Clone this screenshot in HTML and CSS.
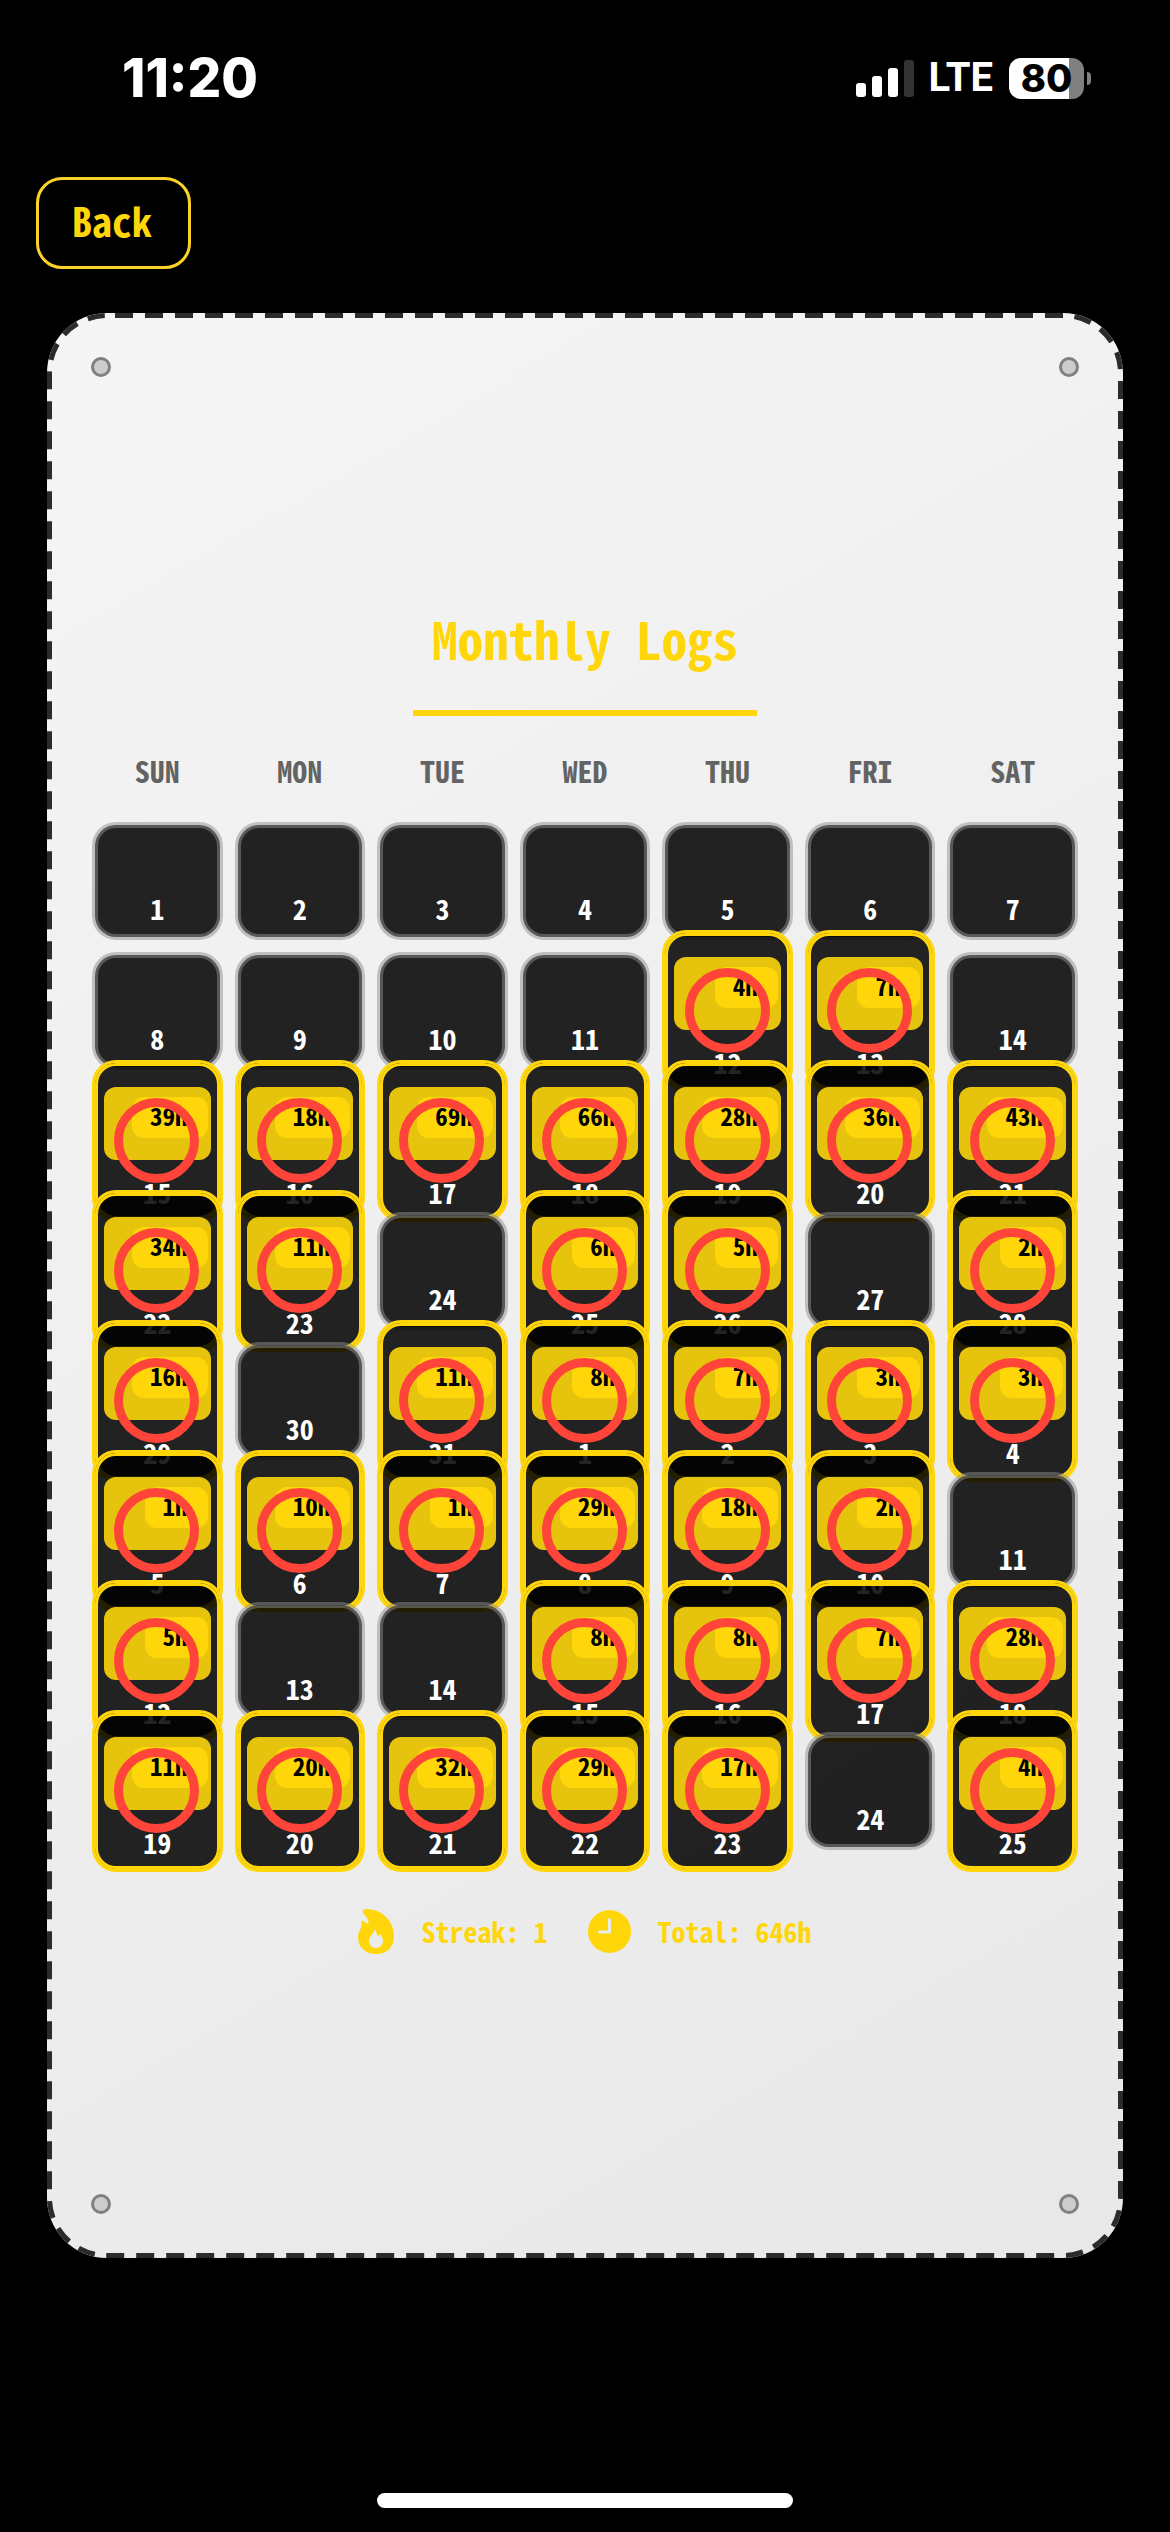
FILE: index.html
```html
<!DOCTYPE html>
<html lang="en">
<head>
<meta charset="utf-8">
<meta name="viewport" content="width=device-width, initial-scale=1">
<title>Monthly Logs</title>
<link rel="stylesheet" href="styles.css">
</head>
<body>
<header class="status">
  <time class="clock">11:20</time>
  <div class="indicators">
    <svg class="signal" viewBox="0 0 58 37" aria-hidden="true">
      <rect x="0" y="23" width="10" height="14" rx="3" fill="#fff"/>
      <rect x="16" y="16" width="10" height="21" rx="3" fill="#fff"/>
      <rect x="32" y="8" width="10" height="29" rx="3" fill="#fff"/>
      <rect x="48" y="0" width="10" height="37" rx="3" fill="#333"/>
    </svg>
    <span class="network">LTE</span>
    <div class="battery"><span class="level">80</span></div>
  </div>
</header>
<nav class="nav"><button class="back" type="button">Back</button></nav>
<main class="card">
  <svg class="stitch" aria-hidden="true"><rect width="100%" height="100%" rx="60"/></svg>
  <span class="screw top left"></span><span class="screw top right"></span>
  <span class="screw bottom left"></span><span class="screw bottom right"></span>
  <h1 class="title">Monthly Logs</h1>
  <table class="calendar">
    <thead>
      <tr class="week"><th>SUN</th><th>MON</th><th>TUE</th><th>WED</th><th>THU</th><th>FRI</th><th>SAT</th></tr>
    </thead>
    <tbody>
      <tr class="week">
        <td class="day">1</td>
        <td class="day">2</td>
        <td class="day">3</td>
        <td class="day">4</td>
        <td class="day">5</td>
        <td class="day">6</td>
        <td class="day">7</td>
      </tr>
      <tr class="week">
        <td class="day">8</td>
        <td class="day">9</td>
        <td class="day">10</td>
        <td class="day">11</td>
        <td class="day logged"><div class="log"><span class="hours">4h</span></div>12</td>
        <td class="day logged"><div class="log"><span class="hours">7h</span></div>13</td>
        <td class="day">14</td>
      </tr>
      <tr class="week">
        <td class="day logged"><div class="log"><span class="hours">39h</span></div>15</td>
        <td class="day logged"><div class="log"><span class="hours">18h</span></div>16</td>
        <td class="day logged"><div class="log"><span class="hours">69h</span></div>17</td>
        <td class="day logged"><div class="log"><span class="hours">66h</span></div>18</td>
        <td class="day logged"><div class="log"><span class="hours">28h</span></div>19</td>
        <td class="day logged"><div class="log"><span class="hours">36h</span></div>20</td>
        <td class="day logged"><div class="log"><span class="hours">43h</span></div>21</td>
      </tr>
      <tr class="week">
        <td class="day logged"><div class="log"><span class="hours">34h</span></div>22</td>
        <td class="day logged"><div class="log"><span class="hours">11h</span></div>23</td>
        <td class="day">24</td>
        <td class="day logged"><div class="log"><span class="hours">6h</span></div>25</td>
        <td class="day logged"><div class="log"><span class="hours">5h</span></div>26</td>
        <td class="day">27</td>
        <td class="day logged"><div class="log"><span class="hours">2h</span></div>28</td>
      </tr>
      <tr class="week">
        <td class="day logged"><div class="log"><span class="hours">16h</span></div>29</td>
        <td class="day">30</td>
        <td class="day logged"><div class="log"><span class="hours">11h</span></div>31</td>
        <td class="day logged"><div class="log"><span class="hours">8h</span></div>1</td>
        <td class="day logged"><div class="log"><span class="hours">7h</span></div>2</td>
        <td class="day logged"><div class="log"><span class="hours">3h</span></div>3</td>
        <td class="day logged"><div class="log"><span class="hours">3h</span></div>4</td>
      </tr>
      <tr class="week">
        <td class="day logged"><div class="log"><span class="hours">1h</span></div>5</td>
        <td class="day logged"><div class="log"><span class="hours">10h</span></div>6</td>
        <td class="day logged"><div class="log"><span class="hours">1h</span></div>7</td>
        <td class="day logged"><div class="log"><span class="hours">29h</span></div>8</td>
        <td class="day logged"><div class="log"><span class="hours">18h</span></div>9</td>
        <td class="day logged"><div class="log"><span class="hours">2h</span></div>10</td>
        <td class="day">11</td>
      </tr>
      <tr class="week">
        <td class="day logged"><div class="log"><span class="hours">5h</span></div>12</td>
        <td class="day">13</td>
        <td class="day">14</td>
        <td class="day logged"><div class="log"><span class="hours">8h</span></div>15</td>
        <td class="day logged"><div class="log"><span class="hours">8h</span></div>16</td>
        <td class="day logged"><div class="log"><span class="hours">7h</span></div>17</td>
        <td class="day logged"><div class="log"><span class="hours">28h</span></div>18</td>
      </tr>
      <tr class="week">
        <td class="day logged"><div class="log"><span class="hours">11h</span></div>19</td>
        <td class="day logged"><div class="log"><span class="hours">20h</span></div>20</td>
        <td class="day logged"><div class="log"><span class="hours">32h</span></div>21</td>
        <td class="day logged"><div class="log"><span class="hours">29h</span></div>22</td>
        <td class="day logged"><div class="log"><span class="hours">17h</span></div>23</td>
        <td class="day">24</td>
        <td class="day logged"><div class="log"><span class="hours">4h</span></div>25</td>
      </tr>
    </tbody>
  </table>
  <footer class="summary">
    <span class="stat">
      <svg class="flame" viewBox="0 0 36 45" aria-hidden="true"><path fill-rule="evenodd" fill="#ffd60a" d="M5.500 4.500C4 2 5 0 8 0C24 0 36 12 36 27C36 38 29 45 18 45C7 45 0 38 0 28C0 22 4.500 19 3.500 14C3 11.500 5 11 6.500 12.500C8 14 9.500 14.500 10.500 15C11 11 8 8 5.500 4.500ZM16 21.500C16 25 11 27 11 32C11 36 14 39 18 39C22 39 25 36 25 32C25 29 23.500 26.500 21.500 25C21 26.500 20.500 27 20 27C18.500 26 18.500 22 16.500 20.500Z"/></svg>
      Streak: 1
    </span>
    <span class="stat">
      <svg class="dial" viewBox="0 0 43 43" aria-hidden="true"><circle cx="21.500" cy="21.500" r="21.500" fill="#ffd60a"/><path d="M21.500 9.500V22H11.500" fill="none" stroke="#ebebeb" stroke-width="3" stroke-linecap="round" stroke-linejoin="round"/></svg>
      Total: 646h
    </span>
  </footer>
</main>
<div class="home-bar"></div>
</body>
</html>
```
FILE: styles.css
```css
*, *::before, *::after { box-sizing: border-box; }

body {
  margin: 0;
  min-height: 100vh;
  display: flex;
  flex-direction: column;
  background: #000;
  color: #fff;
  font-family: "Noto Sans Mono CJK JP", "Liberation Mono", monospace;
  font-weight: 700;
}

.status {
  display: flex;
  justify-content: space-between;
  align-items: center;
  padding: 48px 86px 0 122px;
}
.clock { font: 800 53px/60px Inter, sans-serif; }
.indicators { display: flex; align-items: center; }
.signal { width: 58px; height: 37px; margin-right: 15px; }
.network { font: 700 40px/44px Roboto, sans-serif; margin-right: 16px; }
.battery {
  position: relative;
  width: 75px;
  height: 41px;
  border-radius: 12px;
  background: linear-gradient(90deg, #fff 80%, #808080 80%);
  color: #000;
  text-align: center;
}
.battery::after {
  content: "";
  position: absolute;
  left: 78px;
  top: 14px;
  width: 4px;
  height: 13px;
  border-radius: 0 4px 4px 0;
  background: #808080;
}
.level { font: 800 38px/41px Inter, sans-serif; }

.nav { padding: 69px 36px 0; }
.back {
  display: block;
  padding: 17px 36px 23px 33px;
  border: 3px solid #fad22a;
  border-radius: 26px;
  background: #000;
  color: #ffd60a;
  font: inherit;
  font-size: 40px;
  line-height: 46px;
}

.card {
  position: relative;
  display: flex;
  flex-direction: column;
  align-items: center;
  margin: 44px 47px 0;
  padding: 292px 45px 304px;
  border-radius: 60px;
  overflow: hidden;
  background: linear-gradient(150deg, #f5f5f5, #e8e8e8);
}
.stitch {
  position: absolute;
  inset: 0;
  width: 100%;
  height: 100%;
  fill: none;
  stroke: #2b2b2b;
  stroke-width: 10px;
  stroke-dasharray: 18 12;
  stroke-dashoffset: 22px;
}
.screw {
  position: absolute;
  width: 20px;
  height: 20px;
  border: 3px solid #808080;
  border-radius: 50%;
  background: #ccc;
}
.top { top: 44px; }
.bottom { bottom: 44px; }
.left { left: 44px; }
.right { right: 44px; }

.title {
  margin: 0;
  padding: 0 19px 38px;
  border-bottom: 6px solid #ffd60a;
  color: #ffd60a;
  font-size: 51px;
  line-height: 67px;
}

.calendar { display: block; width: 100%; margin-top: 37px; }
.calendar thead, .calendar tbody { display: block; }
.calendar tbody { margin-top: 34px; }
.week {
  display: grid;
  grid-template-columns: repeat(7, 1fr);
  column-gap: 12px;
  align-items: center;
}
.week th { padding: 0; color: #636363; font-size: 30px; line-height: 35px; }
tbody .week { height: 118px; }
tbody .week + .week { margin-top: 12px; }

/* The 3px border lies outside the fill; the inset ring lies over it. */
.day {
  position: relative;
  z-index: 0;
  display: flex;
  flex-direction: column;
  justify-content: flex-end;
  height: 118px;
  padding: 0 9px 14px;
  border: 3px solid rgba(142, 142, 147, .5);
  border-radius: 24px;
  background: rgba(0, 0, 0, .86) padding-box;
  box-shadow: inset 0 0 0 3px rgba(142, 142, 147, .5);
  font-size: 28px;
  line-height: 30px;
  text-align: center;
}
.logged {
  height: 162px;
  margin: -22px 0;
  padding-bottom: 12px;
  border-color: #ffd60a;
  box-shadow: inset 0 0 0 3px #ffd60a;
}
.logged::after {
  content: "";
  position: absolute;
  top: 35px;
  left: 50%;
  width: 85px;
  height: 85px;
  margin-left: -43px;
  border: 9px solid #ff453a;
  border-radius: 50%;
}
.log {
  display: flex;
  justify-content: flex-end;
  align-items: flex-start;
  height: 73px;
  margin-bottom: 17px;
  padding: 10px 3px;
  border-radius: 12px;
  background: #e6c40d;
}
.hours {
  padding: 0 20px 5px 18px;
  border-radius: 12px;
  background: #ffd60a;
  color: #000;
  font-size: 25px;
  line-height: 36px;
}

.summary {
  display: flex;
  gap: 40px;
  margin-top: 59px;
  color: #ffd60a;
  font-size: 28px;
  line-height: 45px;
}
.stat { display: flex; align-items: center; gap: 27px; }
.flame { width: 36px; height: 45px; }
.dial { width: 43px; height: 43px; }

.home-bar {
  width: 416px;
  height: 15px;
  margin: auto auto 24px;
  border-radius: 8px;
  background: #fff;
}
```
